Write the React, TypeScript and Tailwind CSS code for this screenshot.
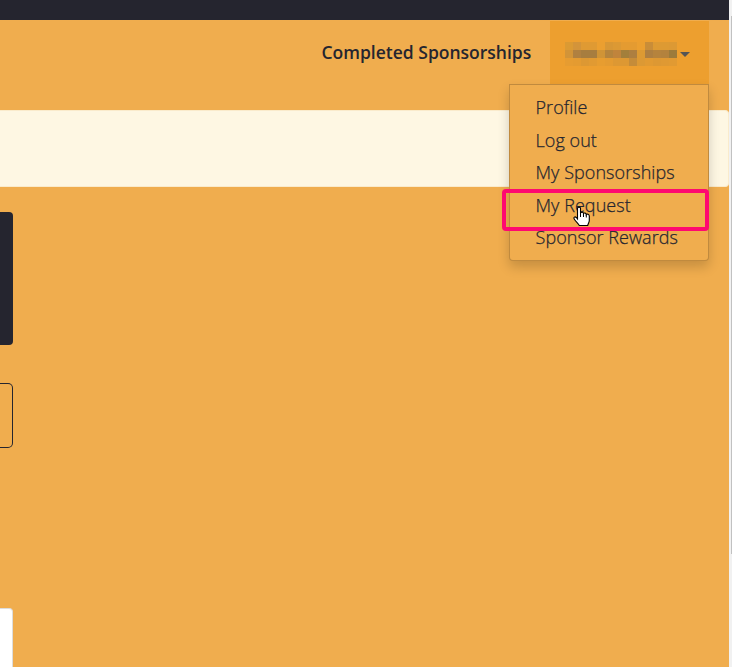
const MENU_ITEMS = ['Profile', 'Log out', 'My Sponsorships', 'My Request', 'Sponsor Rewards'];

// Pixelated account name, one colour per 8px block.
const MOSAIC = [
  ['#db9a33', '#d3943a', '#df9a33', '#df9a33', '#eb9f30', '#d89735', '#dc9934', '#e49b31', '#e49b31', '#eb9f30', '#c98d38', '#dd9a33', '#dd9a33', '#dc9934'],
  ['#d29438', '#b08040', '#a77d3f', '#a77d3f', '#d09436', '#b5843c', '#c0843c', '#a37f3b', '#ad7f40', '#dc9a33', '#ae7f40', '#b5833d', '#b3823d', '#9c7b3b'],
  ['#e69c31', '#e49b31', '#dd9833', '#e19a32', '#e79d30', '#e49b31', '#dd9833', '#dd9833', '#c58c39', '#dc9934', '#e19a32', '#dd9833', '#df9933', '#e19a32'],
];

function HandCursor() {
  return (
    <svg className="absolute left-[63px] top-[121px] z-20" width="20" height="22" viewBox="0 0 20 22">
      <path
        d="M4.5 2.2C4.5 .7 7.5 .7 7.5 2.2V7C8 6 10.5 6 10.5 7.5C11 6.7 13.3 7 13.3 8.5C14 7.6 16.3 8.3 16.3 10V14.5C16.3 16.5 15 17.5 14.7 19.5H6.3C6 18 2.5 15.5 1.2 13C.3 11.2 2 10.3 3.3 11.5L4.5 13Z"
        fill="#fff"
        stroke="#000"
        strokeWidth="1.1"
      />
      <path d="M7.5 6.5V11M10.5 7.5V11M13.3 8.5V11.5" fill="none" stroke="#000" strokeWidth="1" />
    </svg>
  );
}

function AccountMenu() {
  return (
    <div className="absolute right-0 top-[63px] z-10 h-[177px] w-[200px] rounded-b border border-black/20 bg-[#f0ad4e] pt-[6px] shadow-[0_6px_12px_rgba(0,0,0,0.175)]">
      <ul>
        {MENU_ITEMS.map((item) => (
          <li key={item} className="h-[32.5px] whitespace-nowrap pl-[25.5px] text-[18px] font-light leading-[32.5px] tracking-[0.06px] text-[#25252f] [-webkit-text-stroke:0.25px_#25252f]">
            {item}
          </li>
        ))}
      </ul>
      <div className="absolute -left-2 top-[104px] h-[42px] w-[207px] rounded border-4 border-[#ff0870]" />
      <HandCursor />
    </div>
  );
}

export default function App() {
  return (
    <div className="flex h-[667px] w-[732px] overflow-hidden bg-[#f0ad4e] font-['Open_Sans',sans-serif]">
      <div className="w-[729px]">
        <div className="h-5 bg-[#25252f]" />
        <header className="flex h-[90px] justify-end pr-5">
          <a className="mr-[18.5px] pt-[19px] font-semibold leading-[26px] text-[#25252f]">
            <span className="block w-[210px] whitespace-nowrap text-[17.5px]">Completed Sponsorships</span>
          </a>
          <div className="relative mt-px h-[63px] w-[159px] bg-[#ed9f2f]">
            <div className="flex items-center pl-[15px] pt-[21px]">
              <div className="grid w-28 grid-cols-14">
                {MOSAIC.flat().map((color, i) => (
                  <span key={i} className="h-2" style={{ backgroundColor: color }} />
                ))}
              </div>
              <span className="ml-[3px] h-0 w-0 border-x-[5px] border-t-[5px] border-x-transparent border-t-[#555]" />
            </div>
            <AccountMenu />
          </div>
        </header>
        <div className="h-[77px] rounded-r border border-l-0 border-[#faebcc] bg-[#fef7e3]" />
        <div className="mt-[25px] h-[133px] w-[13px] rounded-r bg-[#25252f]" />
        <div className="mt-[38px] h-[65px] w-[13px] rounded-r-[5px] border border-l-0 border-[#25252f]" />
        <div className="mt-40 h-[70px] w-[13px] rounded-tr border-r border-t border-[#ddd] bg-white" />
      </div>
      <div className="w-[3px] bg-[#f1f1f1] pl-0.5 pt-4">
        <div className="h-[538px] bg-[#c1c1c1]" />
      </div>
    </div>
  );
}
